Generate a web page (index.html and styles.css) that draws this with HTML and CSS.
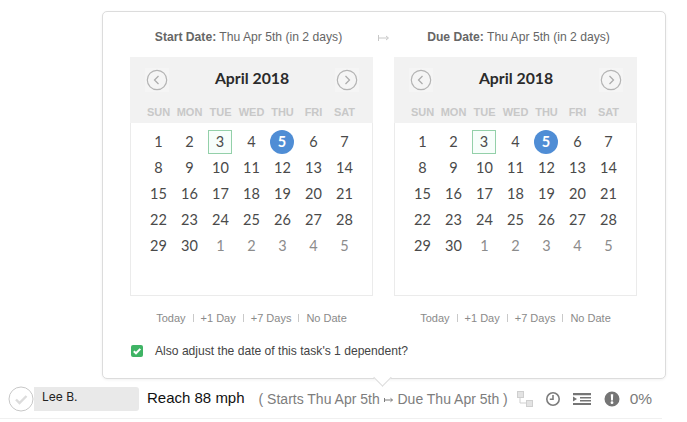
FILE: index.html
```html
<!DOCTYPE html>
<html lang="en">
<head>
<meta charset="utf-8">
<title>Task dates</title>
<link rel="stylesheet" href="styles.css">
</head>
<body>
<div class="stage">
  <div class="popover">
    <div class="pickers">
      <section class="picker">
        <p class="date-label start"><b>Start Date:</b> Thu Apr 5th (in 2 days)</p>
        <div class="calendar">
          <header class="cal-head">
            <div class="cal-title">
              <span class="nav"><svg viewBox="0 0 22 22" width="22" height="22"><circle cx="11" cy="11" r="9.7"/><path d="M12.5 7 8.5 11l4 4"/></svg></span>
              <h2>April 2018</h2>
              <span class="nav"><svg viewBox="0 0 22 22" width="22" height="22"><circle cx="11" cy="11" r="9.7"/><path d="M9.500 7l4 4-4 4"/></svg></span>
            </div>
            <div class="week"><span>SUN</span><span>MON</span><span>TUE</span><span>WED</span><span>THU</span><span>FRI</span><span>SAT</span></div>
          </header>
          <div class="days">
            <span>1</span><span>2</span><span class="today">3</span><span>4</span><span class="selected">5</span><span>6</span><span>7</span>
            <span>8</span><span>9</span><span>10</span><span>11</span><span>12</span><span>13</span><span>14</span>
            <span>15</span><span>16</span><span>17</span><span>18</span><span>19</span><span>20</span><span>21</span>
            <span>22</span><span>23</span><span>24</span><span>25</span><span>26</span><span>27</span><span>28</span>
            <span>29</span><span>30</span><span class="other">1</span><span class="other">2</span><span class="other">3</span><span class="other">4</span><span class="other">5</span>
          </div>
        </div>
        <nav class="shortcuts"><a>Today</a><i></i><a>+1 Day</a><i></i><a>+7 Days</a><i></i><a>No Date</a></nav>
      </section>
      <div class="gap-arrow"><svg viewBox="0 0 12 8" width="12" height="8"><path d="M.5 1v6M.5 4H10M8 2l2.500 2L8 6"/></svg></div>
      <section class="picker">
        <p class="date-label due"><b>Due Date:</b> Thu Apr 5th (in 2 days)</p>
        <div class="calendar">
          <header class="cal-head">
            <div class="cal-title">
              <span class="nav"><svg viewBox="0 0 22 22" width="22" height="22"><circle cx="11" cy="11" r="9.7"/><path d="M12.5 7 8.5 11l4 4"/></svg></span>
              <h2>April 2018</h2>
              <span class="nav"><svg viewBox="0 0 22 22" width="22" height="22"><circle cx="11" cy="11" r="9.7"/><path d="M9.500 7l4 4-4 4"/></svg></span>
            </div>
            <div class="week"><span>SUN</span><span>MON</span><span>TUE</span><span>WED</span><span>THU</span><span>FRI</span><span>SAT</span></div>
          </header>
          <div class="days">
            <span>1</span><span>2</span><span class="today">3</span><span>4</span><span class="selected">5</span><span>6</span><span>7</span>
            <span>8</span><span>9</span><span>10</span><span>11</span><span>12</span><span>13</span><span>14</span>
            <span>15</span><span>16</span><span>17</span><span>18</span><span>19</span><span>20</span><span>21</span>
            <span>22</span><span>23</span><span>24</span><span>25</span><span>26</span><span>27</span><span>28</span>
            <span>29</span><span>30</span><span class="other">1</span><span class="other">2</span><span class="other">3</span><span class="other">4</span><span class="other">5</span>
          </div>
        </div>
        <nav class="shortcuts"><a>Today</a><i></i><a>+1 Day</a><i></i><a>+7 Days</a><i></i><a>No Date</a></nav>
      </section>
    </div>
    <label class="adjust">
      <span class="check"><svg viewBox="0 0 12 12" width="12" height="12"><path d="M2.800 6.200 5 8.300l4.300-4.400"/></svg></span>
      Also adjust the date of this task's 1 dependent?
    </label>
    <span class="caret"></span>
  </div>

  <div class="task">
    <span class="done"><svg viewBox="0 0 26 26" width="26" height="26"><circle cx="13" cy="13" r="12"/><path d="M8 13.500l3.500 3.500L18.500 10"/></svg></span>
    <span class="assignee">Lee B.</span>
    <span class="task-name">Reach 88 mph</span>
    <span class="task-dates">( Starts Thu Apr 5th <svg class="inline-arrow" viewBox="0 0 10 8" width="10" height="8"><path d="M.5 2v4M.5 4H8.500M6.500 2.300l2 1.700-2 1.700"/></svg> Due Thu Apr 5th )</span>
    <span class="tools">
      <svg class="t-dep" viewBox="0 0 16 16" width="16" height="16"><rect x="0.500" y="0.500" width="6" height="6"/><rect x="9.500" y="9.500" width="6" height="6"/><path d="M3 7v5h6"/></svg>
      <svg class="t-clock" viewBox="0 0 16 16" width="16" height="16"><circle cx="8" cy="8" r="6.200"/><path d="M8 4v4.300H4.800"/></svg>
      <svg class="t-indent" viewBox="0 0 18 14" width="18" height="14"><path d="M0 1h18v2.200H0zM7 5h11v1.600H7zM7 8h11v1.600H7zM0 11h18v2H0zM0 4.500 4 7l-4 2.500z"/></svg>
      <svg class="t-alert" viewBox="0 0 16 16" width="16" height="16"><path fill-rule="evenodd" d="M8 .5a7.500 7.500 0 1 1 0 15A7.500 7.500 0 0 1 8 .5zM6.800 3.200l.3 6.300h1.800l.3-6.300zM8 10.300a1.400 1.400 0 1 0 0 2.800 1.400 1.400 0 0 0 0-2.800z"/></svg>
      <span class="percent">0%</span>
    </span>
  </div>
</div>
</body>
</html>
```

FILE: styles.css
```css
* { box-sizing: border-box; }
html, body { margin: 0; padding: 0; background: #fff; }
body { width: 687px; height: 422px; overflow: hidden; font-family: "Liberation Sans", Arial, sans-serif; }

.stage { display: flex; flex-direction: column; padding: 11px 0 0 0; height: 422px; }

.popover {
  position: relative;
  margin-left: 102px;
  width: 564px;
  height: 368px;
  background: #fff;
  border: 1px solid #dcdcdc;
  border-radius: 5px;
  padding: 0 27px;
  box-shadow: 0 1px 3px rgba(0,0,0,.06);
}
.pickers { display: flex; }
.picker { width: 243px; flex: none; }
.gap-arrow { width: 21px; flex: none; padding-top: 22px; display: flex; justify-content: center; }
.gap-arrow svg { fill: none; stroke: #c8c8c8; stroke-width: 1; }

.date-label {
  margin: 0;
  height: 45px;
  padding-top: 18px;
  line-height: 14px;
  font-size: 12.150px;
  color: #666;
  text-align: center;
  white-space: nowrap;
}
.date-label.start { padding-right: 6px; }
.date-label.due { padding-left: 6px; }
.date-label b { color: #666; }

.calendar { height: 239px; border: 1px solid #ebebeb; border-top: 0; background: #fff; }
.cal-head { background: #f2f2f2; height: 66px; margin: 0 -1px; padding: 0 14px 0 15px; }
.cal-title { display: flex; align-items: center; justify-content: space-between; height: 44px; padding-top: 1px; }
.cal-title h2 { margin: 0 0 3px; font: 700 15.800px/20px Lato, sans-serif; color: #2b2b2b; }
.nav { width: 24px; height: 24px; background: #f5f5f5; display: flex; align-items: center; justify-content: center; }
.nav svg { fill: none; stroke: #b4b4b4; stroke-width: 1.200; }
.nav path { stroke: #aaa; }
.week { display: grid; grid-template-columns: repeat(7, 31px); margin: 3px 0 0 -2px; }
.week span { text-align: center; font-size: 11px; font-weight: 700; color: #c8c8c8; line-height: 16px; }

.days {
  display: grid;
  grid-template-columns: repeat(7, 31px);
  grid-auto-rows: 26px;
  padding: 6px 0 0 11.500px;
}
.days span {
  display: flex;
  align-items: center;
  justify-content: center;
  justify-self: center;
  width: 24px;
  height: 24px;
  margin-top: 1px;
  padding-left: 1px;
  font: 400 14.500px/1 Lato, sans-serif;
  color: #4a4a4a;
}
.days .today { border: 1px solid #93d0a9; background: #f7fefb; padding-left: 0; }
.days .selected { background: #4f8dd5; color: #fff; font-weight: 700; border-radius: 50%; padding-left: 0; }
.days .other { color: #8c8c8c; }

.shortcuts { display: flex; justify-content: center; align-items: center; height: 44px; padding-bottom: 1px; font-size: 11px; color: #8a8a8a; }
.shortcuts i { width: 1px; height: 8px; background: #c9c9c9; margin: 0 7px; }

.adjust { display: flex; align-items: center; gap: 12px; margin-top: 4px; padding-left: 1px; font-size: 12.100px; line-height: 14px; color: #444; }
.check { width: 12px; height: 12px; border-radius: 2px; background: #3fb465; display: flex; }
.check svg { fill: none; stroke: #fff; stroke-width: 2; }

.caret {
  position: absolute;
  left: 273px;
  bottom: -6px;
  width: 13px;
  height: 13px;
  background: #fff;
  border-right: 1px solid #dcdcdc;
  border-bottom: 1px solid #dcdcdc;
  transform: rotate(45deg);
}

.task {
  display: flex;
  align-items: center;
  height: 40px;
  margin-right: 25px;
  padding: 0 0 1px 8px;
  border-bottom: 1px solid #f0f0f0;
}
.done { width: 26px; height: 26px; flex: none; position: relative; z-index: 1; background: #fff; border-radius: 50%; margin-top: 1px; }
.done svg { fill: none; stroke: #d0d0d0; }
.done circle { stroke: #c8c8c8; stroke-width: 1; }
.done path { stroke: #dcdcdc; stroke-width: 2.400; }
.assignee {
  width: 105px;
  height: 24px;
  margin: 1px 0 0 0;
  padding: 3px 0 0 8px;
  background: #e9e9e9;
  border-radius: 0 3px 3px 0;
  font: 400 12px/14px Inter, "Liberation Sans", sans-serif;
  color: #222;
}
.task-name { margin-left: 8px; font: 400 15px/18px "Liberation Sans", sans-serif; color: #111; white-space: nowrap; }
.task-dates { margin-left: 14px; padding-top: 2px; font-size: 14px; line-height: 18px; color: #7d7d7d; white-space: nowrap; }
.inline-arrow { fill: none; stroke: #7d7d7d; stroke-width: 1; vertical-align: 0; }
.tools { display: flex; align-items: center; margin-left: 9px; padding-top: 1px; }
.t-dep { fill: #e3e3e3; stroke: #cfcfcf; margin-right: 12px; }
.t-dep path { fill: none; }
.t-clock { fill: none; stroke: #7c7c7c; stroke-width: 1.600; margin-right: 12px; }
.t-indent { fill: #757575; margin-right: 13px; }
.t-alert { fill: #757575; margin-right: 10px; }
.percent { font-size: 15.500px; color: #7b7b7b; }
```
